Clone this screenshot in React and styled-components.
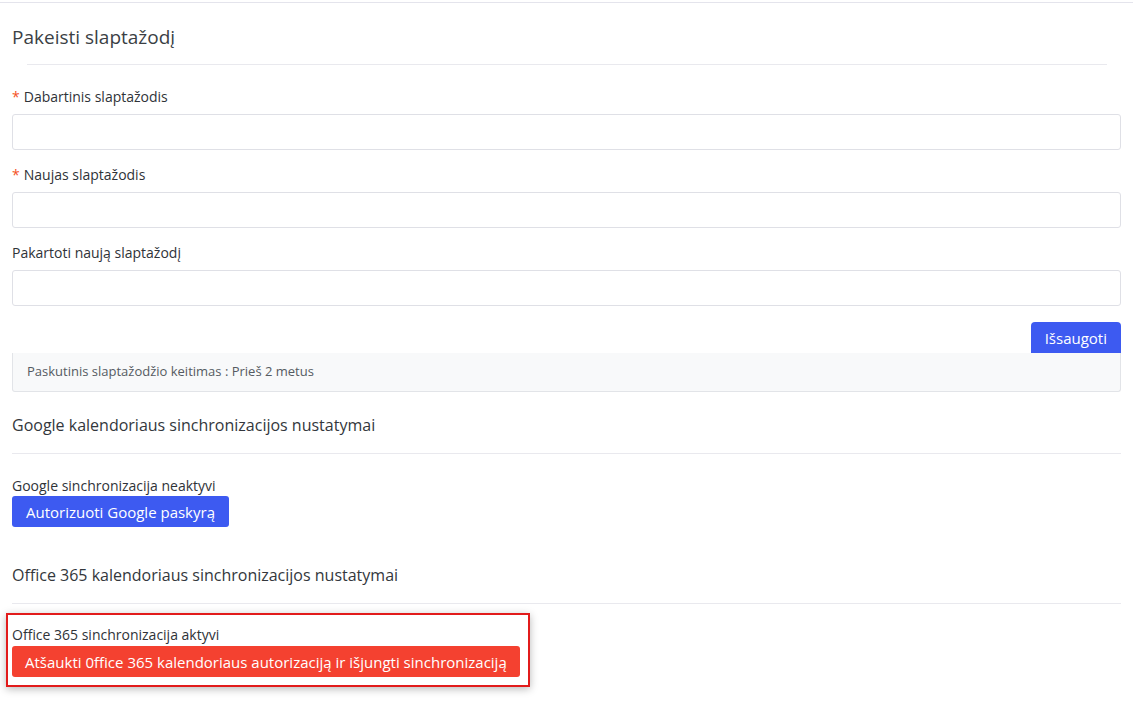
import React from 'react';
import styled, { createGlobalStyle } from 'styled-components';

const GlobalStyle = createGlobalStyle`
  html, body {
    margin: 0;
    padding: 0;
    background: #ffffff;
    font-family: "Open Sans", "Liberation Sans", Arial, sans-serif;
    color: #343a40;
  }
`;

const Card = styled.div`
  margin-top: 2px;
  border-top: 1px solid #e4e4ec;
  padding: 20px 12px 20px 12px;
`;

const Title = styled.h3`
  margin: 0;
  font-size: 19px;
  font-weight: 400;
  line-height: 28px;
  color: #3b3f45;
`;

const TitleRule = styled.hr`
  margin: 13px 14px 0 15px;
  border: 0;
  border-top: 1px solid #e9e9ee;
`;

const Form = styled.form`
  display: flex;
  flex-direction: column;
  padding-top: 23px;
`;

const Field = styled.div`
  display: flex;
  flex-direction: column;
  gap: 8px;
  margin-bottom: 16px;
`;

const Label = styled.label`
  font-size: 14px;
  line-height: 18px;
  color: #2f3338;
`;

const Required = styled.span`
  color: #f4511e;
  margin-right: 4px;
`;

const Input = styled.input`
  height: 36px;
  box-sizing: border-box;
  border: 1px solid #dfe0e6;
  border-radius: 3px;
  padding: 0 10px;
  font-size: 13px;
  outline: none;
  background: #fff;
`;

const Actions = styled.div`
  display: flex;
  justify-content: flex-end;
`;

const Button = styled.button`
  border: none;
  border-radius: ${({ $flatBottom }) => ($flatBottom ? '4px 4px 0 0' : '3px')};
  background: ${({ $danger }) => ($danger ? '#f44130' : '#3d5af1')};
  color: #ffffff;
  font-family: inherit;
  font-size: 15px;
  font-weight: 500;
  height: 31px;
  padding: 0 ${({ $danger }) => ($danger ? '13px' : '14px')};
  cursor: pointer;
  align-self: flex-start;
  white-space: nowrap;
`;

const InfoBox = styled.div`
  background: #f8f9fa;
  border: 1px solid #e2e4e8;
  border-top: none;
  border-radius: 0 0 3px 3px;
  padding: 10px 14px 11px;
  font-size: 13px;
  line-height: 17px;
  color: #555b62;
`;

const Section = styled.section`
  display: flex;
  flex-direction: column;
  padding-top: ${({ $first }) => ($first ? '22px' : '0')};
`;

const SectionTitle = styled.h4`
  margin: 0;
  font-size: 16px;
  font-weight: 400;
  line-height: 22px;
  color: #33373c;
`;

const SectionRule = styled.hr`
  width: 100%;
  margin: 17px 0 0 0;
  border: 0;
  border-top: 1px solid #e9e9ee;
`;

const SyncBlock = styled.div`
  display: flex;
  flex-direction: column;
  padding-top: 23px;
  padding-bottom: 37px;
`;

const Highlight = styled.div`
  display: flex;
  flex-direction: column;
  align-self: flex-start;
  margin: 9px 0 0 -6px;
  padding: 11px 8px 8px 4px;
  border: 2px solid #e21b1b;
  box-shadow: 0 2px 8px rgba(0, 0, 0, 0.28);
`;

const Status = styled.div`
  font-size: 14px;
  line-height: 18px;
  color: #2f3338;
  margin-bottom: ${({ $gap }) => $gap || '1px'};
`;

export default function App() {
  return (
    <>
      <GlobalStyle />
      <Card>
        <Title>Pakeisti slaptažodį</Title>
        <TitleRule />
        <Form onSubmit={(e) => e.preventDefault()}>
          <Field>
            <Label><Required>*</Required>Dabartinis slaptažodis</Label>
            <Input type="password" />
          </Field>
          <Field>
            <Label><Required>*</Required>Naujas slaptažodis</Label>
            <Input type="password" />
          </Field>
          <Field>
            <Label>Pakartoti naują slaptažodį</Label>
            <Input type="password" />
          </Field>
          <Actions>
            <Button type="submit" $flatBottom>Išsaugoti</Button>
          </Actions>
          <InfoBox>Paskutinis slaptažodžio keitimas : Prieš 2 metus</InfoBox>
        </Form>

        <Section $first>
          <SectionTitle>Google kalendoriaus sinchronizacijos nustatymai</SectionTitle>
          <SectionRule />
          <SyncBlock>
            <Status>Google sinchronizacija neaktyvi</Status>
            <Button>Autorizuoti Google paskyrą</Button>
          </SyncBlock>
        </Section>

        <Section>
          <SectionTitle>Office 365 kalendoriaus sinchronizacijos nustatymai</SectionTitle>
          <SectionRule />
          <Highlight>
            <Status $gap="2px">Office 365 sinchronizacija aktyvi</Status>
            <Button $danger>Atšaukti 0ffice 365 kalendoriaus autorizaciją ir išjungti sinchronizaciją</Button>
          </Highlight>
        </Section>
      </Card>
    </>
  );
}
